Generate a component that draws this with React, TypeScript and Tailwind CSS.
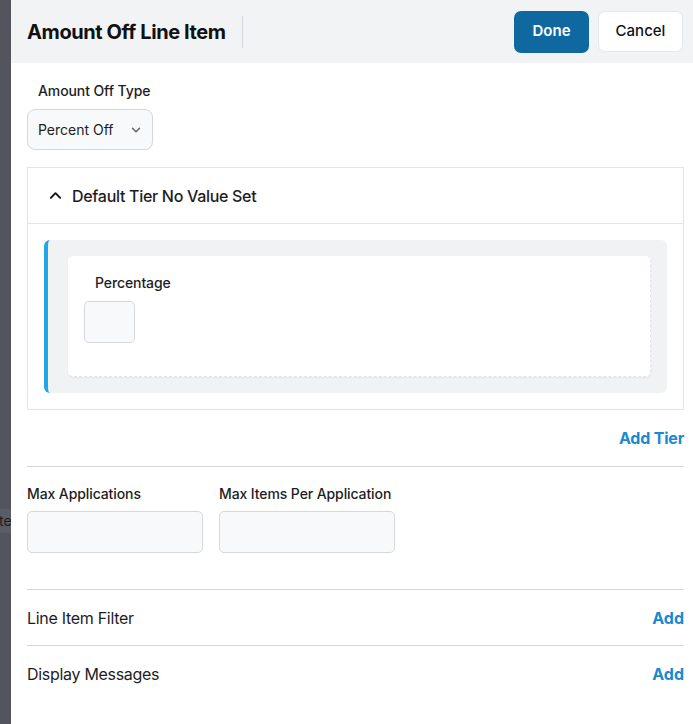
import React from "react";

const font = { fontFamily: "Inter, 'Noto Sans', sans-serif" };

function Chevron({ up = false, className = "" }: { up?: boolean; className?: string }) {
  return (
    <svg viewBox="0 0 16 16" className={className} fill="none" stroke="currentColor" strokeWidth={up ? 2 : 1.8} strokeLinecap="round" strokeLinejoin="round">
      {up ? <path d="M3 10.5 L8 5.5 L13 10.5" /> : <path d="M4 6 L8 10 L12 6" />}
    </svg>
  );
}

export default function App() {
  return (
    <div className="flex w-[693px] h-[724px] overflow-hidden bg-white text-[#1d1d1f] antialiased" style={font}>
      <div className="w-[11px] shrink-0 bg-[#52555d] flex flex-col">
        <div className="h-[509px]" />
        <div className="h-[24px] bg-[#5a5d65] overflow-hidden flex items-center">
          <span className="text-[14px] text-[#1c1c1e] -ml-[1px] leading-none">te</span>
        </div>
      </div>
      <div className="flex-1 flex flex-col">
        <div className="h-[63px] bg-[#f2f3f5] flex items-center pl-4 pr-[10px]">
          <h1 className="text-[20px] font-bold tracking-[-0.4px] text-[#111]">Amount Off Line Item</h1>
          <div className="ml-4 w-px h-[32px] bg-[#d3d4d7]" />
          <div className="ml-auto flex items-center gap-[9px]">
            <button className="w-[75px] h-[42px] rounded-[7px] bg-[#0f69a0] text-white text-[15px] font-semibold">Done</button>
            <button className="w-[85px] h-[41px] rounded-[7px] bg-white border border-[#e6e7ea] text-[#111] text-[15px] font-medium">Cancel</button>
          </div>
        </div>
        <div className="pl-4 pr-[9px] flex flex-col">
          <label className="mt-[19px] ml-[11px] text-[14px] font-medium tracking-[-0.1px] leading-[17px]">Amount Off Type</label>
          <div className="mt-[10px] w-[126px] h-[41px] rounded-[8px] border border-[#d5d7db] bg-[#f8f9fb] flex items-center pl-[10px] pr-[9px]">
            <span className="text-[14px]">Percent Off</span>
            <Chevron className="ml-auto w-[14px] h-[14px] text-[#666]" />
          </div>
          <div className="mt-[17px] border border-[#e3e4e6] flex flex-col">
            <div className="h-[56px] flex items-center pl-[20px] border-b border-[#e3e4e6]">
              <Chevron up className="w-[15px] h-[15px] text-[#111]" />
              <span className="ml-[9px] text-[16px] font-medium tracking-[-0.3px]">Default Tier No Value Set</span>
            </div>
            <div className="px-4 pt-4 pb-4">
              <div className="h-[153px] rounded-[6px] bg-[#f1f2f4] border-l-[4px] border-[#22a6e6] pl-[20px] pr-4 py-4 flex">
                <div className="flex-1 rounded-[5px] bg-white border-r border-b border-dashed border-[#e3e4e7] shadow-[0_1px_2px_rgba(0,0,0,0.05)] flex flex-col pl-4">
                  <span className="mt-[18px] ml-[11px] text-[14px] font-medium tracking-[-0.1px] leading-[17px]">Percentage</span>
                  <div className="mt-[10px] w-[51px] h-[42px] rounded-[5px] border border-[#d5d7db] bg-[#f8f9fb]" />
                </div>
              </div>
            </div>
          </div>
          <div className="mt-[19px] flex justify-end">
            <span className="text-[16px] font-bold tracking-[-0.2px] text-[#1a89d0] leading-[19px]">Add Tier</span>
          </div>
          <div className="mt-[18px] h-px bg-[#d6d6d8]" />
          <div className="mt-[18px] flex gap-4">
            <div className="flex flex-col w-[176px]">
              <span className="text-[14px] font-medium tracking-[-0.1px] leading-[17px]">Max Applications</span>
              <div className="mt-[9px] h-[42px] rounded-[5px] border border-[#d5d7db] bg-[#f8f9fb]" />
            </div>
            <div className="flex flex-col w-[176px]">
              <span className="text-[14px] font-medium tracking-[-0.1px] leading-[17px]">Max Items Per Application</span>
              <div className="mt-[9px] h-[42px] rounded-[5px] border border-[#d5d7db] bg-[#f8f9fb]" />
            </div>
          </div>
          <div className="mt-[36px] h-px bg-[#d6d6d8]" />
          <div className="h-[55px] flex items-center justify-between">
            <span className="text-[16px] tracking-[-0.3px]">Line Item Filter</span>
            <span className="text-[16px] font-bold text-[#1a89d0]">Add</span>
          </div>
          <div className="h-px bg-[#d6d6d8]" />
          <div className="h-[55px] flex items-center justify-between">
            <span className="text-[16px] tracking-[-0.3px]">Display Messages</span>
            <span className="text-[16px] font-bold text-[#1a89d0]">Add</span>
          </div>
        </div>
      </div>
    </div>
  );
}
